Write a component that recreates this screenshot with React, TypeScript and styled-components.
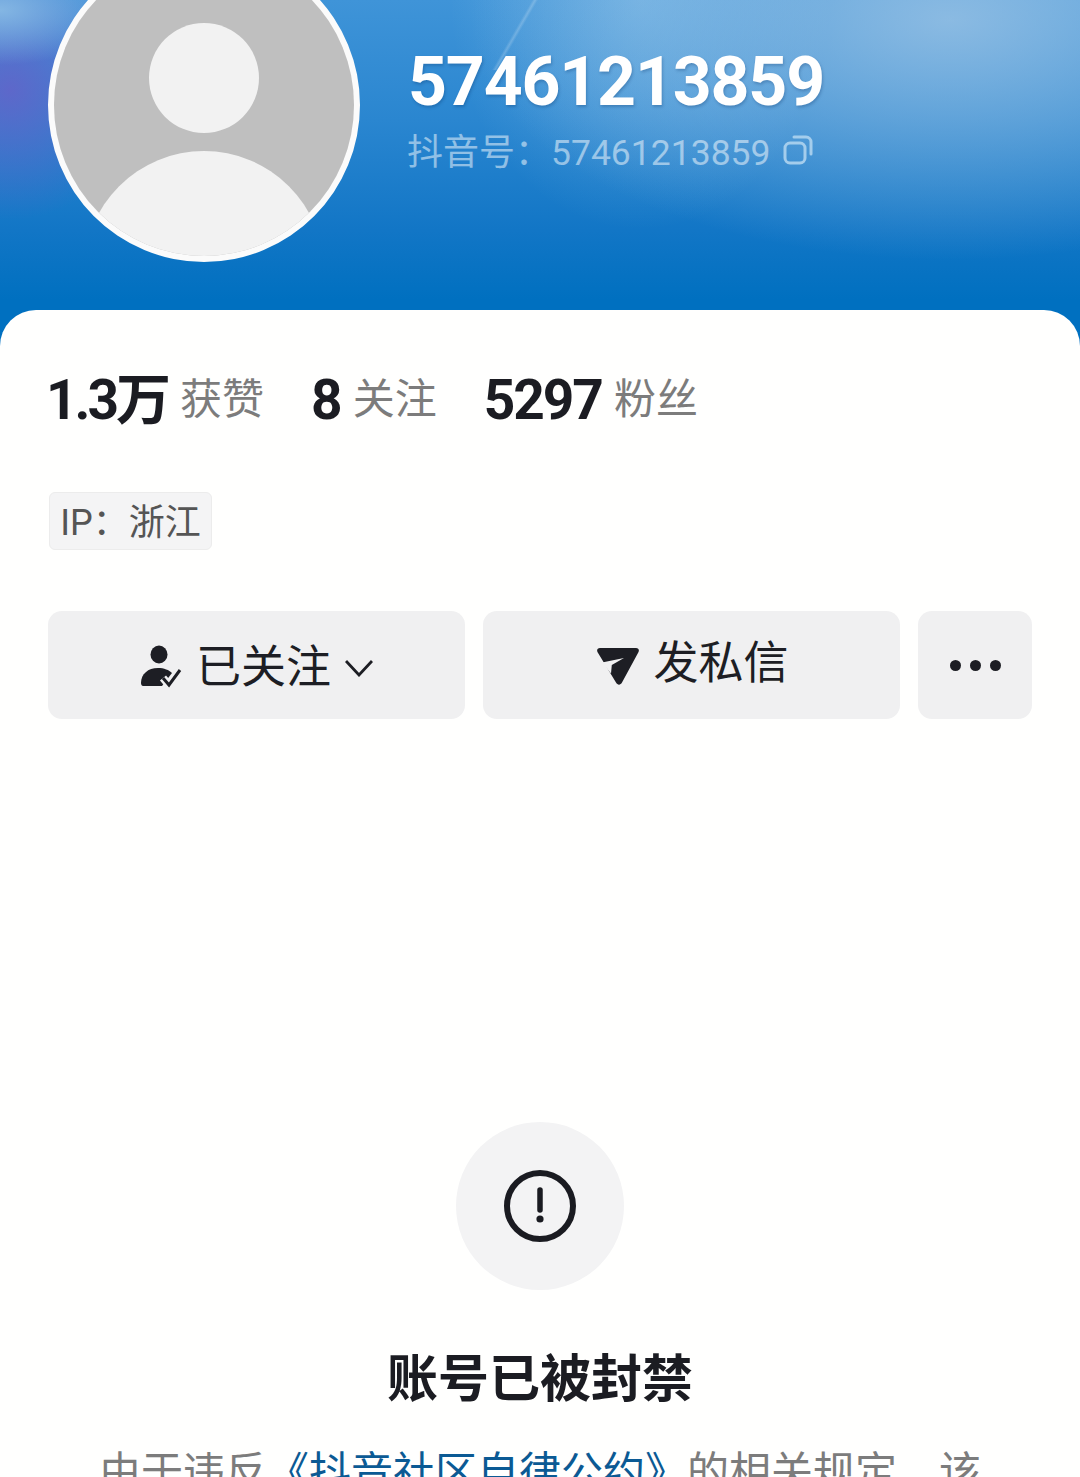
import React from "react";
import styled, { createGlobalStyle } from "styled-components";

const FONT = `Roboto, "Noto Sans CJK SC", sans-serif`;

const GlobalStyle = createGlobalStyle`
    html, body {
        margin: 0;
        padding: 0;
        background: #fffffe;
        font-family: ${FONT};
    }
`;

const App = () => {
    return (
        <Page>
            <GlobalStyle />
            <Hero>
                <Avatar>
                    <svg width="100%" height="100%" viewBox="0 0 300 302">
                        <rect width="300" height="302" fill="#bfbfbf" />
                        <circle cx="150" cy="124" r="55" fill="#f2f2f2" />
                        <circle cx="150" cy="317" r="120" fill="#f2f2f2" />
                    </svg>
                </Avatar>
                <Identity>
                    <Name>57461213859</Name>
                    <AccountRow>
                        <span>抖音号：</span>
                        <AccountId>57461213859</AccountId>
                        <svg width="30" height="32" viewBox="0 0 30 32" fill="none" stroke="#a4cdec" strokeWidth="3">
                            <rect x="2" y="9" width="20" height="20" rx="5" />
                            <path d="M11 3h12a5 5 0 0 1 5 5v12" strokeLinecap="round" />
                        </svg>
                    </AccountRow>
                </Identity>
            </Hero>
            <Card>
                <Stats>
                    <Stat>
                        <StatNumber $tight>1.3万</StatNumber>
                        <StatLabel>获赞</StatLabel>
                    </Stat>
                    <Stat>
                        <StatNumber>8</StatNumber>
                        <StatLabel>关注</StatLabel>
                    </Stat>
                    <Stat>
                        <StatNumber>5297</StatNumber>
                        <StatLabel>粉丝</StatLabel>
                    </Stat>
                </Stats>
                <IpTag>IP：浙江</IpTag>
                <Actions>
                    <ActionButton>
                        <FollowIcon width="42" height="44" viewBox="0 0 42 44">
                            <ellipse cx="19" cy="9.5" rx="8.5" ry="9" fill="#1d1e24" />
                            <path d="M1 38c0-9 7-15 17-15 6 0 11 2 14 5L22 41H3c-1 0-2-1-2-3z" fill="#1d1e24" />
                            <path d="M23 33l6 7 11-15" fill="none" stroke="#f0f0f1" strokeWidth="8" />
                            <path d="M23 33l6 7 11-15" fill="none" stroke="#1d1e24" strokeWidth="3" />
                        </FollowIcon>
                        <ButtonText>已关注</ButtonText>
                        <Chevron width="28" height="18" viewBox="0 0 28 18" fill="none" stroke="#1d1e24" strokeWidth="2.8">
                            <path d="M1 2l13 14L27 2" />
                        </Chevron>
                    </ActionButton>
                    <ActionButton>
                        <SendIcon width="42" height="37" viewBox="0 0 42 37">
                            <path
                                d="M3 0h36c2.5 0 3.6 2 2.4 4.2L25 34.6c-1.6 2.8-4.4 2.8-6 0L.6 4.2C-.6 2 .5 0 3 0z"
                                fill="#1d1e24"
                            />
                            <path d="M27 10L5 14.5l9 11 .8-8.5z" fill="#f0f0f1" />
                        </SendIcon>
                        <ButtonText $raised>发私信</ButtonText>
                    </ActionButton>
                    <MoreButton>
                        <Dot />
                        <Dot />
                        <Dot />
                    </MoreButton>
                </Actions>
                <Notice>
                    <NoticeBadge>
                        <svg width="72" height="72" viewBox="0 0 72 72" fill="none">
                            <circle cx="36" cy="36" r="33" stroke="#1a1b21" strokeWidth="6" />
                            <path d="M36 20v20" stroke="#1a1b21" strokeWidth="5.5" strokeLinecap="round" />
                            <circle cx="36" cy="49" r="3.6" fill="#1a1b21" />
                        </svg>
                    </NoticeBadge>
                    <NoticeTitle>账号已被封禁</NoticeTitle>
                    <NoticeText>
                        由于违反<NoticeLink>《抖音社区自律公约》</NoticeLink>的相关规定，该
                    </NoticeText>
                </Notice>
            </Card>
        </Page>
    );
};

export default App;

const Page = styled.div`
    width: 1080px;
    height: 1477px;
    overflow: hidden;
    background-color: #fffffe;
    background-image:
        linear-gradient(120deg, rgba(255, 255, 255, 0) 47%, rgba(255, 255, 255, 0.2) 50%, rgba(255, 255, 255, 0) 53%),
        radial-gradient(ellipse 120px 55px at 0px 10px, rgba(135, 185, 228, 0.95), rgba(135, 185, 228, 0) 100%),
        radial-gradient(ellipse 130px 130px at 10px 90px, rgba(105, 95, 200, 0.8), rgba(105, 95, 200, 0) 100%),
        radial-gradient(ellipse 480px 240px at 950px 20px, rgba(165, 200, 230, 0.75), rgba(165, 200, 230, 0) 100%),
        radial-gradient(ellipse 190px 230px at 640px 0px, rgba(190, 225, 245, 0.32), rgba(190, 225, 245, 0) 100%),
        linear-gradient(180deg, #3f94d8 0px, #2a86d0 120px, #1276c6 230px, #0070c0 300px);
    background-size:
        60px 70px,
        100% 360px,
        100% 360px,
        100% 360px,
        100% 360px,
        100% 360px;
    background-position:
        485px 0,
        0 0,
        0 0,
        0 0,
        0 0,
        0 0;
    background-repeat: no-repeat;
`;

const Hero = styled.header`
    height: 310px;
    padding-left: 48px;
    display: flex;
    align-items: flex-start;
    gap: 48px;
`;

const Avatar = styled.div`
    flex: none;
    width: 300px;
    height: 302px;
    margin-top: -52px;
    border: 6px solid #fbfbfb;
    border-radius: 50%;
    background: #f2f2f2;
    overflow: hidden;
    svg {
        display: block;
    }
`;

const Identity = styled.div`
    padding-top: 43px;
    display: flex;
    flex-direction: column;
`;

const Name = styled.h1`
    margin: 0;
    color: #fff;
    font-size: 68px;
    line-height: 78px;
    font-weight: 700;
    letter-spacing: -1.2px;
    text-shadow: 1px 2px 3px rgba(0, 40, 90, 0.25);
`;

const AccountRow = styled.div`
    margin-top: 8px;
    margin-left: -1px;
    display: flex;
    align-items: center;
    color: rgba(255, 255, 255, 0.5);
    font-size: 36px;
    line-height: 48px;
    svg {
        margin-left: 13px;
        margin-top: -7px;
    }
`;

const AccountId = styled.span`
    font-size: 35.5px;
`;

const Card = styled.main`
    height: 1167px;
    padding: 0 48px;
    box-sizing: border-box;
    background: #fffffe;
    border-radius: 36px 36px 0 0;
`;

const Stats = styled.div`
    padding-top: 57px;
    display: flex;
    gap: 47px;
    height: 66px;
    margin-left: -2px;
`;

const Stat = styled.div`
    display: flex;
    align-items: center;
    gap: 12px;
`;

const StatNumber = styled.strong<{ $tight?: boolean }>`
    color: #1b1c22;
    font-size: 55px;
    font-weight: 700;
    letter-spacing: ${(p) => (p.$tight ? "-3px" : "-2px")};
    line-height: 66px;
`;

const StatLabel = styled.span`
    color: #7c7c7c;
    font-size: 42px;
    line-height: 66px;
`;

const IpTag = styled.div`
    margin: 59px 0 0 1px;
    width: 163px;
    height: 58px;
    box-sizing: border-box;
    border: 1px solid #ececec;
    border-radius: 6px;
    background: #f4f4f5;
    color: #555;
    font-size: 36px;
    line-height: 60px;
    text-align: center;
    white-space: nowrap;
`;

const Actions = styled.div`
    margin-top: 61px;
    display: grid;
    grid-template-columns: 417px 417px 114px;
    column-gap: 18px;
`;

const ActionButton = styled.div`
    height: 108px;
    border-radius: 14px;
    background: #f0f0f1;
    display: flex;
    align-items: center;
    justify-content: center;
    gap: 14px;
`;

const MoreButton = styled(ActionButton)`
    gap: 9px;
`;

const FollowIcon = styled.svg`
    margin-top: 3px;
`;

const Chevron = styled.svg`
    margin-top: 6px;
`;

const SendIcon = styled.svg`
    margin: 2px 0 0 3px;
`;

const Dot = styled.i`
    width: 11px;
    height: 11px;
    border-radius: 50%;
    background: #1d1e24;
`;

const ButtonText = styled.span<{ $raised?: boolean }>`
    color: #1d1e24;
    font-size: 45px;
    line-height: 60px;
    margin-top: ${(p) => (p.$raised ? "-2px" : "6px")};
`;

const Notice = styled.section`
    margin-top: 403px;
    display: flex;
    flex-direction: column;
    align-items: center;
`;

const NoticeBadge = styled.div`
    width: 168px;
    height: 168px;
    border-radius: 50%;
    background: #f3f3f4;
    display: flex;
    align-items: center;
    justify-content: center;
`;

const NoticeTitle = styled.h2`
    margin: 56px 0 0;
    color: #1b1c22;
    font-size: 51px;
    line-height: 68px;
    font-weight: 700;
`;

const NoticeText = styled.p`
    margin: 29px -10px 0;
    color: #7c7c7c;
    font-size: 42px;
    line-height: 60px;
    white-space: nowrap;
`;

const NoticeLink = styled.span`
    color: #0b5a94;
`;
